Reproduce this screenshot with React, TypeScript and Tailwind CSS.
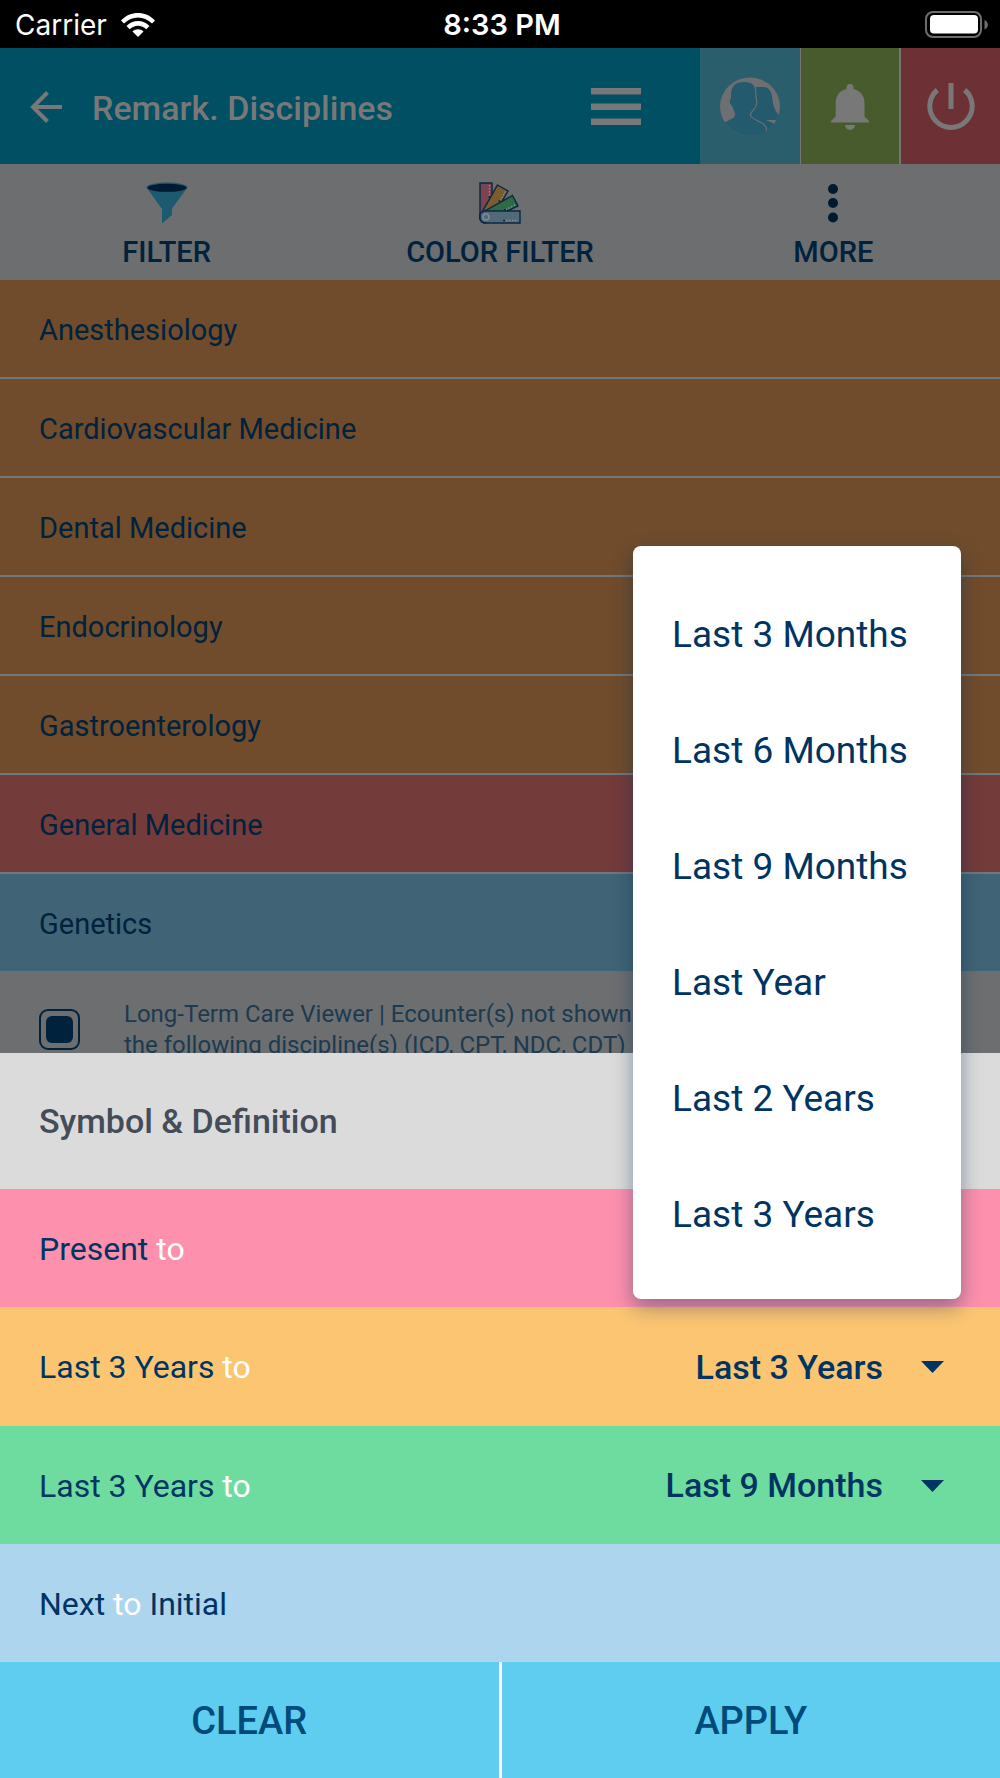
import { useState } from "react";

const disciplines = [
  { name: "Anesthesiology", tone: "bg-[#704c2c]" },
  { name: "Cardiovascular Medicine", tone: "bg-[#704c2c]" },
  { name: "Dental Medicine", tone: "bg-[#704c2c]" },
  { name: "Endocrinology", tone: "bg-[#704c2c]" },
  { name: "Gastroenterology", tone: "bg-[#704c2c]" },
  { name: "General Medicine", tone: "bg-[#743b3b]" },
  { name: "Genetics", tone: "bg-[#406375]" },
];

const periods = [
  "Last 3 Months",
  "Last 6 Months",
  "Last 9 Months",
  "Last Year",
  "Last 2 Years",
  "Last 3 Years",
];

function WifiIcon() {
  return (
    <svg width="34" height="24" viewBox="0 0 34 24" aria-hidden="true">
      <path d="M0 7.4C9.6-2.4 24.4-2.4 34 7.4l-3 3C23 2.400 11 2.400 3 10.400z" fill="#fff" />
      <path d="M5.500 13c6.500-6.600 16.500-6.600 23 0l-3.200 3.200c-4.700-4.700-11.900-4.700-16.600 0z" fill="#fff" />
      <path d="M11.500 18.600c3.100-3 7.900-3 11 0L17 24z" fill="#fff" />
    </svg>
  );
}

function BatteryIcon() {
  return (
    <svg width="64" height="28" viewBox="0 0 64 28" aria-hidden="true">
      <rect x="1" y="1" width="55" height="25" rx="7" fill="none" stroke="#6e6e6e" strokeWidth="2" />
      <rect x="5" y="4" width="48" height="18.500" rx="4" fill="#fff" />
      <path d="M59.500 9c4.500 1.500 4.500 8 0 9.500z" fill="#6e6e6e" />
    </svg>
  );
}

function BackIcon() {
  return (
    <svg width="32" height="32" viewBox="0 0 32 32" fill="none" stroke="#787878" strokeWidth="4" aria-hidden="true">
      <path d="M17.500 1.500 3 16l14.500 14.500M3 16h29" />
    </svg>
  );
}

function MenuIcon() {
  return (
    <svg width="50" height="38" viewBox="0 0 50 38" fill="#787878" aria-hidden="true">
      <path d="M0 0h50v6.500H0zM0 15.500h50V22H0zM0 30.500h50V37H0z" />
    </svg>
  );
}

function PeopleIcon() {
  return (
    <svg width="60" height="60" viewBox="0 0 60 60" aria-hidden="true">
      <defs>
        <clipPath id="people-circle">
          <ellipse cx="30" cy="29.500" rx="30" ry="29" />
        </clipPath>
      </defs>
      <g clipPath="url(#people-circle)">
        <rect width="60" height="60" fill="#6e6f72" />
        <path
          d="M28 10h15c7 0 9 6 9.500 13 1 7 3 12 6.500 15l1 2-3 3H46l9 4v13H25z"
          fill="#245a6e"
        />
        <path
          d="M0 48 13 41q3-2 1.500-6l-2.500-6q-3-2-2-6l1-2C10 10 15 5 24 5s12 4 12 13q1 8-2 12-4 6-4 9l12 8 5 13H0z"
          fill="#245a6e"
        />
        <path
          d="M35 9c1 3 .500 8 1 11q2 7-1 11c-2 3-5 4-4.500 8 3 4 12 6 15 10l1.500 5"
          fill="none"
          stroke="#6e6f72"
          strokeWidth="1.200"
        />
      </g>
    </svg>
  );
}

function BellIcon() {
  return (
    <svg width="38" height="46" viewBox="0 0 38 46" fill="#787878" aria-hidden="true">
      <path d="M15.500 5V3.500a3.500 3.500 0 0 1 7 0V5C29 6.500 33.500 11.500 33.500 19v13.500l4.500 4.500v1.500H0V37l4.700-4.500V19C4.700 11.500 9 6.500 15.500 5z" />
      <path d="M14 41h10a5 5 0 0 1-10 0z" />
    </svg>
  );
}

function PowerIcon() {
  return (
    <svg width="48" height="47" viewBox="0 0 48 47" fill="none" stroke="#787878" strokeWidth="5" aria-hidden="true">
      <path d="M10.300 7a21.200 21.200 0 1 0 27.400 0M24 0v26" />
    </svg>
  );
}

function FunnelIcon() {
  return (
    <svg width="42" height="42" viewBox="0 0 42 42" aria-hidden="true">
      <path d="M.500 5.500 16 27v14.500l10-8.500v-6.500L41.500 5.500z" fill="#1c5a70" />
      <ellipse cx="21" cy="5.500" rx="20.500" ry="5" fill="#1c5a70" />
      <ellipse cx="21" cy="5.800" rx="19.500" ry="4" fill="#001b31" />
    </svg>
  );
}

function SwatchIcon() {
  return (
    <svg width="42" height="42" viewBox="0 0 42 42" stroke="#0b2740" strokeWidth="1.400" aria-hidden="true">
      <path d="M1 1h12v30L1 34z" fill="#7b4452" />
      <path d="M18.500 3 29 9 16 31 2 32z" fill="#7a5c2e" />
      <path d="M33.500 13.500 39 24 22 32 4 30z" fill="#2f6a48" />
      <path d="M6 29h35v12H7a6 6 0 0 1-1-12z" fill="#516a7a" />
      <path d="M1 31v4q0 6 6 6" fill="none" />
      <circle cx="7" cy="35" r="3" fill="none" stroke="#7c8a94" strokeWidth="1.600" />
      <g fill="none" stroke="#8b8c8e" strokeWidth="1.400" strokeDasharray="1.500 1.500">
        <path d="M10.500 3v11M26.500 9.500l-5 9M36 23l-9 4.500M27 38.500h12" />
      </g>
      <g fill="#0b2740" stroke="none">
        <circle cx="10.500" cy="15" r="1" />
        <circle cx="20.500" cy="19" r="1" />
        <circle cx="26" cy="28" r="1" />
        <circle cx="25" cy="38.500" r="1" />
      </g>
    </svg>
  );
}

function MoreIcon() {
  return (
    <svg width="12" height="42" viewBox="0 0 12 42" fill="#001b31" aria-hidden="true">
      <circle cx="6" cy="7" r="5" />
      <circle cx="6" cy="21" r="5" />
      <circle cx="6" cy="35.500" r="5" />
    </svg>
  );
}

function ToolButton({ label, icon }: { label: string; icon: React.ReactNode }) {
  return (
    <button className="flex flex-1 flex-col items-center gap-2.5 pt-[18px] text-[29px] leading-9 font-medium text-[#00223d]">
      {icon}
      {label}
    </button>
  );
}

function PeriodSelect({ label, initial }: { label: string; initial: string }) {
  const [value, setValue] = useState(initial);
  return (
    <div className="relative flex items-center">
      <select
        aria-label={label}
        value={value}
        onChange={(event) => setValue(event.target.value)}
        className="h-16 appearance-none bg-transparent pr-[61px] text-[34px] font-medium [text-align-last:right]"
      >
        {periods.map((period) => (
          <option key={period}>{period}</option>
        ))}
      </select>
      <svg className="pointer-events-none absolute right-0" width="23" height="12" viewBox="0 0 23 12" aria-hidden="true">
        <path d="M0 0h23L11.500 12z" fill="#003463" />
      </svg>
    </div>
  );
}

function RangeRow({ tone, from, end, children }: { tone: string; from: string; end?: string; children?: React.ReactNode }) {
  return (
    <div className={`relative flex items-center justify-between pt-0.5 pr-14 pl-[39px] text-[32px] text-[#003463] ${tone}`}>
      <p>
        {from} <span className="text-white">to</span> {end}
      </p>
      {children}
    </div>
  );
}

export default function App() {
  return (
    <div className="flex h-screen flex-col overflow-hidden bg-[#6c6e70] font-[Roboto,sans-serif]">
      <div className="grid h-12 shrink-0 grid-cols-3 items-center bg-black pt-0.5 pr-[11px] pl-[15px] font-[Inter,sans-serif] text-[28px] text-white">
        <span className="flex items-center gap-3.5">
          Carrier <WifiIcon />
        </span>
        <span className="text-center text-[29px] font-semibold">8:33 PM</span>
        <span className="flex justify-end">
          <BatteryIcon />
        </span>
      </div>

      <header className="flex h-[116px] shrink-0 items-stretch bg-[#004f62] text-[#787878]">
        <button aria-label="Back" className="px-[30px] pt-0.5">
          <BackIcon />
        </button>
        <h1 className="flex flex-1 items-center pt-1 text-[34px] font-medium">Remark. Disciplines</h1>
        <button aria-label="Menu" className="px-[59px] pt-0.5">
          <MenuIcon />
        </button>
        <button aria-label="Profile" className="flex w-[100px] items-center justify-center bg-[#2b5e6d] pt-0.5">
          <PeopleIcon />
        </button>
        <button aria-label="Notifications" className="flex w-[100px] items-center justify-center border-x border-[#757575] bg-[#485b2d] pt-0.5">
          <BellIcon />
        </button>
        <button aria-label="Log out" className="flex w-[100px] items-center justify-center border-l border-[#757575] bg-[#6d3035]">
          <PowerIcon />
        </button>
      </header>

      <nav className="flex h-[116px] shrink-0">
        <ToolButton label="FILTER" icon={<FunnelIcon />} />
        <ToolButton label="COLOR FILTER" icon={<SwatchIcon />} />
        <ToolButton label="MORE" icon={<MoreIcon />} />
      </nav>

      <main className="min-h-0 flex-1 overflow-hidden text-[#00223d]">
        <ul className="flex flex-col gap-0.5 bg-[#70787d]">
          {disciplines.map(({ name, tone }) => (
            <li key={name} className={`flex h-[97px] items-center pt-1 pl-[39px] text-[29px] ${tone}`}>
              {name}
            </li>
          ))}
        </ul>
        <label className="flex items-start gap-11 pt-7 pl-[39px] text-[24px] leading-[31px] text-[#1c3a50]">
          <input
            type="checkbox"
            defaultChecked
            className="mt-[10px] size-[41px] shrink-0 appearance-none rounded-[9px] border-2 border-[#00223d] p-[5px] before:block before:size-full before:rounded-md checked:before:bg-[#00223d]"
          />
          <span>
            Long-Term Care Viewer | Ecounter(s) not shown
            <br />
            the following discipline(s) (ICD, CPT, NDC, CDT)
          </span>
        </label>
      </main>

      <section className="shrink-0">
        <h2 className="flex h-[136px] items-center bg-[#dbdbdb] pl-[39px] text-[34px] font-medium text-[#434c58]">
          Symbol &amp; Definition
        </h2>
        <div className="grid h-[473px] auto-rows-fr">
          <RangeRow tone="bg-[#fc90ad]" from="Present">
            <div
              role="listbox"
              aria-label="Present to"
              className="absolute right-[39px] bottom-2 z-10 flex w-[328px] flex-col rounded-lg bg-white pt-[30px] pb-[27px] shadow-[0_8px_20px_rgba(0,40,80,0.4)]"
            >
              {periods.map((period) => (
                <button key={period} role="option" aria-selected="false" className="h-[116px] pl-[39px] text-left text-[37px]">
                  {period}
                </button>
              ))}
            </div>
          </RangeRow>
          <RangeRow tone="bg-[#fbc572]" from="Last 3 Years">
            <PeriodSelect label="Second range end" initial="Last 3 Years" />
          </RangeRow>
          <RangeRow tone="bg-[#6fdc9f]" from="Last 3 Years">
            <PeriodSelect label="Third range end" initial="Last 9 Months" />
          </RangeRow>
          <RangeRow tone="bg-[#aed5ee]" from="Next" end="Initial" />
        </div>
        <div className="flex h-[116px] gap-[3px] bg-white text-[38px] font-medium text-[#004b7a]">
          <button className="flex-1 bg-[#5fcdf0] pt-0.5">CLEAR</button>
          <button className="flex-1 bg-[#5fcdf0] pt-0.5">APPLY</button>
        </div>
      </section>
    </div>
  );
}
